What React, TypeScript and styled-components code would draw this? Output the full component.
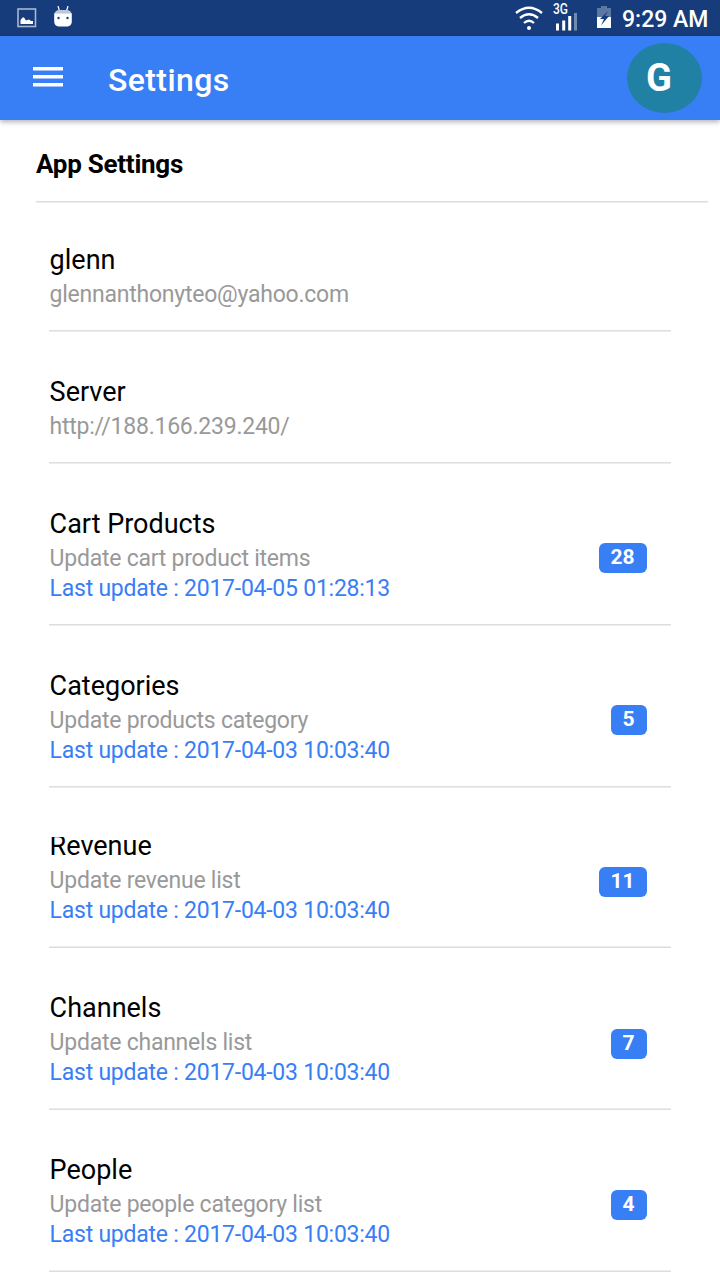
import React from "react";
import styled, { createGlobalStyle } from "styled-components";

const GlobalStyle = createGlobalStyle`
  *, *::before, *::after { box-sizing: border-box; }
  body { margin: 0; background: #fff; font-family: Roboto, "Noto Sans", sans-serif; overflow: hidden; }
`;

const Screen = styled.div`
  width: 720px;
  height: 1280px;
  overflow: hidden;
  background: #fff;
  display: flex;
  flex-direction: column;
`;

const StatusBar = styled.header`
  flex: none;
  height: 36px;
  padding: 0 12px 0 17px;
  background: #163c7c;
  color: #fff;
  display: flex;
  align-items: center;
  justify-content: space-between;
`;

const IconGroup = styled.div`
  display: flex;
  align-items: center;
  svg { display: block; }
`;

const Clock = styled.span`
  margin-left: 11px;
  width: 86px;
  font-size: 23px;
  line-height: 32px;
  font-weight: 500;
  white-space: nowrap;
  padding-top: 4px;
`;

const Toolbar = styled.div`
  flex: none;
  height: 84px;
  padding: 0 18px 0 33px;
  background: #387ef5;
  color: #fff;
  display: flex;
  align-items: center;
  box-shadow: 0 2px 5px rgba(0, 0, 0, 0.3);
`;

const MenuButton = styled.button`
  border: 0;
  padding: 0;
  margin-bottom: 2px;
  width: 30px;
  background: none;
  svg { display: block; }
`;

const PageTitle = styled.h1`
  flex: 1;
  margin: 3px 0 0 45px;
  font-size: 32px;
  line-height: 40px;
  font-weight: 500;
  letter-spacing: 0.4px;
`;

const Avatar = styled.div`
  width: 75px;
  height: 70px;
  padding-right: 11px;
  border-radius: 50%;
  background: #2081a5;
  display: flex;
  align-items: center;
  justify-content: center;
  font-size: 38px;
  line-height: 68px;
  font-weight: 700;
`;

const SectionHeader = styled.h2`
  flex: none;
  margin: 0 12px 0 36px;
  height: 83px;
  padding-top: 29px;
  border-bottom: 1px solid #ececec;
  box-shadow: inset 0 -1px 0 #dedede;
  font-size: 26px;
  line-height: 30px;
  font-weight: 700;
  letter-spacing: -0.25px;
  color: #000;
`;

const List = styled.main`
  padding: 0 49px;
  display: flex;
  flex-direction: column;
`;

const Item = styled.section<{ $height: number; $top: number; $lowRule?: boolean }>`
  flex: none;
  height: ${(p) => p.$height}px;
  padding: ${(p) => p.$top}px 24.4px 0 0.6px;
  border-bottom: 1px solid ${(p) => (p.$lowRule ? "#dedede" : "#ececec")};
  box-shadow: inset 0 -1px 0 ${(p) => (p.$lowRule ? "#ececec" : "#dedede")};
  display: flex;
  align-items: flex-start;
  justify-content: space-between;
`;

const ItemTitle = styled.h3<{ $clipped?: boolean }>`
  margin: 0 0 4px;
  font-size: 27px;
  line-height: 32px;
  font-weight: 400;
  color: #000;
  clip-path: ${(p) => (p.$clipped ? "inset(7px 0 0 0)" : "none")};
`;

const Line = styled.p<{ $accent?: boolean }>`
  margin: 0;
  font-size: 23px;
  letter-spacing: -0.24px;
  line-height: 30px;
  color: ${(p) => (p.$accent ? "#387ef5" : "#999")};
  white-space: nowrap;
`;

const Badge = styled.span<{ $offset: number }>`
  margin-top: ${(p) => p.$offset}px;
  height: 30px;
  padding: 0 12px;
  border-radius: 6px;
  background: #387ef5;
  color: #fff;
  font-size: 21px;
  line-height: 28px;
  font-weight: 700;
`;

interface Setting {
  title: string;
  detail: string;
  updated?: string;
  count?: number;
  height: number;
  top: number;
  badge?: number;
  clipped?: boolean;
  lowRule?: boolean;
}

const settings: Setting[] = [
  { title: "glenn", detail: "glennanthonyteo@yahoo.com", height: 129, top: 41 },
  { title: "Server", detail: "http://188.166.239.240/", height: 132, top: 44 },
  { title: "Cart Products", detail: "Update cart product items", updated: "2017-04-05 01:28:13", count: 28, height: 162, top: 44, badge: 35 },
  { title: "Categories", detail: "Update products category", updated: "2017-04-03 10:03:40", count: 5, height: 162, top: 44, badge: 35 },
  { title: "Revenue", detail: "Update revenue list", updated: "2017-04-03 10:03:40", count: 11, height: 160, top: 42, badge: 37, clipped: true, lowRule: true },
  { title: "Channels", detail: "Update channels list", updated: "2017-04-03 10:03:40", count: 7, height: 162, top: 44, badge: 37, lowRule: true },
  { title: "People", detail: "Update people category list", updated: "2017-04-03 10:03:40", count: 4, height: 162, top: 44, badge: 36, lowRule: true },
];

const PictureIcon = () => (
  <svg width="20" height="20" viewBox="0 0 20 20">
    <rect x="1" y="1" width="17.5" height="17.5" fill="none" stroke="#a9b7d0" strokeWidth="1.6" />
    <path d="M3.500 16V12L5.500 9.500 7 9.500 9 12.500 12 11.500 14 13 16 13V16Z" fill="#fff" />
  </svg>
);

const DroidIcon = () => (
  <svg width="18" height="24" viewBox="0 0 18 24">
    <path d="M4 0l1.500 5M14 0l-1.500 5" stroke="#fff" strokeWidth="1.2" />
    <path d="M5 4h8q3.500 0 4.500 3.500H.5Q1.500 4 5 4z" fill="#bcc7da" />
    <path d="M.2 7.200h17.600v7.800c0 4-2 5.500-5.500 5.500H5.700C2.200 20.500.2 19 .2 15z" fill="#fff" />
    <circle cx="4.500" cy="12" r="1.200" fill="#163c7c" />
    <circle cx="13.500" cy="12" r="1.200" fill="#163c7c" />
  </svg>
);

const WifiIcon = () => (
  <svg width="28" height="24" viewBox="0 0 28 24">
    <g fill="none" stroke="#fff" strokeWidth="2.300">
      <path d="M1 7Q14-3.500 27 7M5 12Q14 4.500 23 12M9 17Q14 12.500 19 17" />
    </g>
    <circle cx="14" cy="22" r="2" fill="#fff" />
  </svg>
);

const SignalIcon = () => (
  <svg width="24" height="36" viewBox="0 0 24 36">
    <text x="0" y="13.700" fill="#fff" fontFamily="Roboto" fontSize="14" fontWeight="500" textLength="15" lengthAdjust="spacingAndGlyphs">3G</text>
    <path d="M4.500 30.500v-7M10.700 30.500V20.500M16.700 30.500V16" stroke="#fff" strokeWidth="3" />
    <path d="M22.500 30.500V13" stroke="#738ab0" strokeWidth="3" />
  </svg>
);

const BatteryIcon = () => (
  <svg width="14" height="24" viewBox="0 0 14 24">
    <path d="M4 0h6v2h4v20H0V2h4z" fill="#5c77a3" />
    <path d="M0 11h14v11H0z" fill="#fff" />
    <path d="M11 5L3 13h4l-3 6.500 8-9.500H8z" fill="#163c7c" />
  </svg>
);

const MenuIcon = () => (
  <svg width="30" height="22" viewBox="0 0 30 22">
    <path d="M0 2.700h30M0 10.700h30M0 18.700h30" stroke="#fff" strokeWidth="3.500" />
  </svg>
);

const LeftIcons = styled(IconGroup)`
  gap: 17px;
`;

const SignalSlot = styled.span`
  margin: 0 20px 0 10px;
`;

export default function App() {
  return (
    <Screen>
      <GlobalStyle />
      <StatusBar>
        <LeftIcons>
          <PictureIcon />
          <DroidIcon />
        </LeftIcons>
        <IconGroup>
          <WifiIcon />
          <SignalSlot><SignalIcon /></SignalSlot>
          <BatteryIcon />
          <Clock>9:29 AM</Clock>
        </IconGroup>
      </StatusBar>
      <Toolbar>
        <MenuButton aria-label="Menu"><MenuIcon /></MenuButton>
        <PageTitle>Settings</PageTitle>
        <Avatar>G</Avatar>
      </Toolbar>
      <SectionHeader>App Settings</SectionHeader>
      <List>
        {settings.map((s) => (
          <Item key={s.title} $height={s.height} $top={s.top} $lowRule={s.lowRule}>
            <div>
              <ItemTitle $clipped={s.clipped}>{s.title}</ItemTitle>
              <Line>{s.detail}</Line>
              {s.updated && <Line $accent>Last update : {s.updated}</Line>}
            </div>
            {s.count !== undefined && <Badge $offset={s.badge ?? 0}>{s.count}</Badge>}
          </Item>
        ))}
      </List>
    </Screen>
  );
}
